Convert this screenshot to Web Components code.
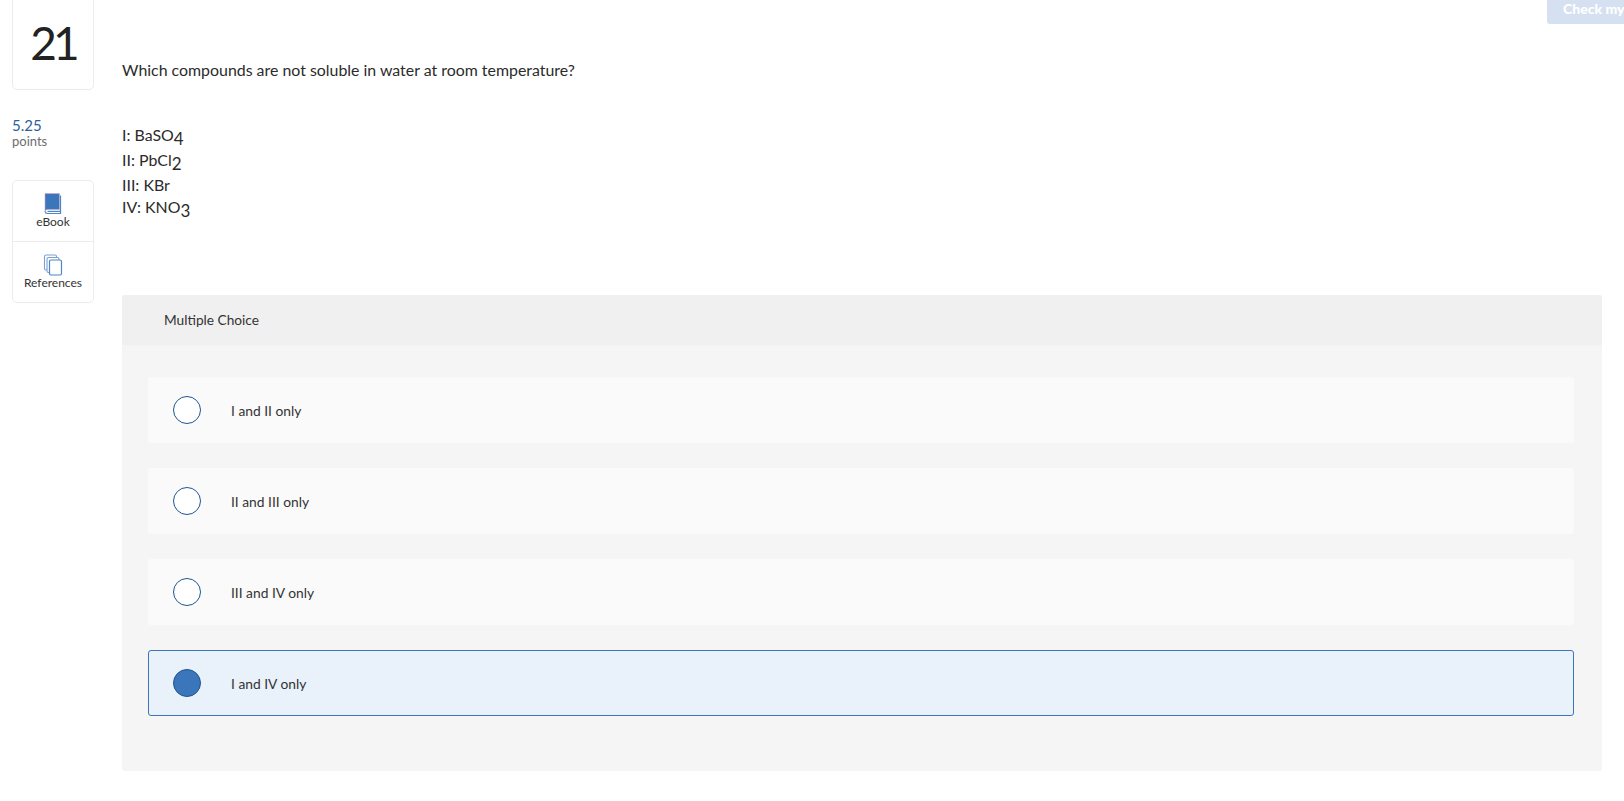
<!DOCTYPE html>
<html lang="en">
<head>
<meta charset="utf-8">
<title>Question 21</title>
<style>
    html, body {
        margin: 0;
        height: 100%;
        overflow: hidden;
        background: #fff;
        font-family: "Lato", "Open Sans", sans-serif;
        color: #2b2b2b;
    }
</style>
</head>
<body>
<quiz-page>
    <question-rail slot="rail" number="21" points="5.25">
        <rail-tool label="eBook" icon="book"></rail-tool>
        <rail-tool label="References" icon="pages"></rail-tool>
    </question-rail>
    <question-stem slot="main">
        <span slot="prompt">Which compounds are not soluble in water at room temperature?</span>
        <chem-line sub="4">I: BaSO</chem-line>
        <chem-line sub="2">II: PbCl</chem-line>
        <chem-line>III: KBr</chem-line>
        <chem-line sub="3">IV: KNO</chem-line>
    </question-stem>
    <choice-panel slot="main" heading="Multiple Choice">
        <choice-option>I and II only</choice-option>
        <choice-option>II and III only</choice-option>
        <choice-option>III and IV only</choice-option>
        <choice-option selected>I and IV only</choice-option>
    </choice-panel>
</quiz-page>

<script>
class QuizPage extends HTMLElement {
    constructor() {
        super();
        this.shadowDOM = this.attachShadow({ mode: "open" });
    }

    connectedCallback() {
        this.shadowDOM.innerHTML = `
        <style>
            :host {
                display: flex;
                align-items: flex-start;
                gap: 28px;
                padding: 0 22px 0 12px;
            }
            .main {
                flex: 1;
                min-width: 0;
            }
            button {
                position: absolute;
                top: -10px;
                left: 1547px;
                width: 130px;
                height: 34px;
                padding: 2px 0 0 16px;
                border: 0;
                border-radius: 3px;
                background: #d5e1f0;
                color: #fff;
                font: 900 14px "Lato", sans-serif;
                text-align: left;
                white-space: nowrap;
            }
        </style>
        <slot name="rail"></slot>
        <div class="main"><slot name="main"></slot></div>
        <button type="button">Check my work</button>`;
    }
}

class QuestionRail extends HTMLElement {
    constructor() {
        super();
        this.shadowDOM = this.attachShadow({ mode: "open" });
    }

    connectedCallback() {
        this.shadowDOM.innerHTML = `
        <style>
            :host {
                display: block;
                flex: none;
                width: 82px;
            }
            .number {
                box-sizing: border-box;
                height: 100px;
                margin-top: -10px;
                padding-top: 18px;
                border: 1px solid #ececec;
                border-radius: 5px;
                font-size: 46px;
                line-height: 68px;
                font-weight: 400;
                letter-spacing: -4px;
                color: #222;
                text-align: center;
            }
            .score {
                margin-top: 26px;
                font-size: 15px;
                line-height: 18px;
                color: #2d5f9a;
            }
            .label {
                margin-top: -1px;
                font-size: 13px;
                line-height: 16px;
                color: #6d6d6d;
            }
            .tools {
                margin-top: 31px;
                border: 1px solid #ececec;
                border-radius: 5px;
            }
        </style>
        <div class="number">${this.getAttribute("number")}</div>
        <div class="score">${this.getAttribute("points")}</div>
        <div class="label">points</div>
        <div class="tools"><slot></slot></div>`;
    }
}

const RAIL_ICONS = {
    book: `<svg width="20" height="22" viewBox="0 0 20 22">
            <path d="M2 .5h14.5v16H4.5A2.5 2.5 0 0 0 2 19V.5z" fill="#3b76bb" stroke="#c9a9c4" stroke-width=".6"/>
            <path d="M17.5 2.5v18H4.6A2.6 2.6 0 0 1 2 18.4" fill="none" stroke="#4c85c8" stroke-width="1.2"/>
            <path d="M4.5 18.4h13" stroke="#4c85c8" stroke-width="1.2"/>
        </svg>`,
    pages: `<svg width="20" height="22" viewBox="0 0 20 22">
            <rect x="1.5" y="1" width="12" height="15" rx="1.5" fill="#fff" stroke="#7d9fd0" stroke-width="1.1"/>
            <rect x="4" y="3.5" width="12" height="15" rx="1.5" fill="#fff" stroke="#7d9fd0" stroke-width="1.1"/>
            <rect x="6.5" y="6" width="12" height="15" rx="1.5" fill="#fff" stroke="#4c85c8" stroke-width="1.2"/>
        </svg>`
};

class RailTool extends HTMLElement {
    constructor() {
        super();
        this.shadowDOM = this.attachShadow({ mode: "open" });
    }

    connectedCallback() {
        this.shadowDOM.innerHTML = `
        <style>
            :host {
                display: flex;
                flex-direction: column;
                align-items: center;
                box-sizing: border-box;
                height: 60px;
                padding-top: 12px;
                font-size: 12px;
                color: #333;
            }
            :host(:not(:last-child)) {
                height: 61px;
                border-bottom: 1px solid #ececec;
            }
            svg {
                display: block;
            }
            span {
                margin-top: -1px;
                line-height: 16px;
            }
        </style>
        ${RAIL_ICONS[this.getAttribute("icon")]}
        <span>${this.getAttribute("label")}</span>`;
    }
}

class QuestionStem extends HTMLElement {
    constructor() {
        super();
        this.shadowDOM = this.attachShadow({ mode: "open" });
    }

    connectedCallback() {
        this.shadowDOM.innerHTML = `
        <style>
            :host {
                display: block;
                padding-top: 59px;
                font-size: 15.9px;
                line-height: 22px;
                color: #2b2b2b;
            }
            .lines {
                margin-top: 43px;
                margin-bottom: 74px;
            }
        </style>
        <slot name="prompt"></slot>
        <div class="lines"><slot></slot></div>`;
    }
}

class ChemLine extends HTMLElement {
    constructor() {
        super();
        this.shadowDOM = this.attachShadow({ mode: "open" });
    }

    connectedCallback() {
        const sub = this.getAttribute("sub");
        this.shadowDOM.innerHTML = `
        <style>
            :host {
                display: block;
                height: 22px;
            }
            :host([sub]) {
                padding-bottom: 3px;
            }
            sub {
                font-size: 17px;
                line-height: 0;
                vertical-align: -4px;
            }
        </style>
        <slot></slot>${sub ? `<sub>${sub}</sub>` : ""}`;
    }
}

class ChoicePanel extends HTMLElement {
    constructor() {
        super();
        this.shadowDOM = this.attachShadow({ mode: "open" });
    }

    connectedCallback() {
        this.shadowDOM.innerHTML = `
        <style>
            :host {
                display: block;
                border-radius: 3px;
                background: #f5f5f5;
                overflow: hidden;
            }
            header {
                height: 50px;
                padding-left: 42px;
                background: #f0f0f0;
                font-size: 13.7px;
                line-height: 50px;
                color: #333;
            }
            .options {
                display: flex;
                flex-direction: column;
                gap: 25px;
                padding: 32px 28px 55px 26px;
            }
        </style>
        <header>${this.getAttribute("heading")}</header>
        <div class="options"><slot></slot></div>`;
    }
}

class ChoiceOption extends HTMLElement {
    constructor() {
        super();
        this.shadowDOM = this.attachShadow({ mode: "open" });
    }

    connectedCallback() {
        this.shadowDOM.innerHTML = `
        <style>
            :host {
                display: flex;
                align-items: center;
                gap: 30px;
                box-sizing: border-box;
                height: 66px;
                padding-left: 24px;
                border: 1px solid transparent;
                border-radius: 3px;
                background: #fafafa;
                font-size: 13.8px;
                color: #333;
            }
            :host([selected]) {
                border-color: #3b76bb;
                background: #e9f1fa;
            }
            .radio {
                flex: none;
                box-sizing: border-box;
                width: 28px;
                height: 28px;
                border: 1px solid #1d5591;
                border-radius: 50%;
                background: #fff;
            }
            :host([selected]) .radio {
                background: #3b76bb;
            }
        </style>
        <span class="radio"></span>
        <span><slot></slot></span>`;
    }
}

customElements.define("quiz-page", QuizPage);
customElements.define("question-rail", QuestionRail);
customElements.define("rail-tool", RailTool);
customElements.define("question-stem", QuestionStem);
customElements.define("chem-line", ChemLine);
customElements.define("choice-panel", ChoicePanel);
customElements.define("choice-option", ChoiceOption);
</script>
</body>
</html>
